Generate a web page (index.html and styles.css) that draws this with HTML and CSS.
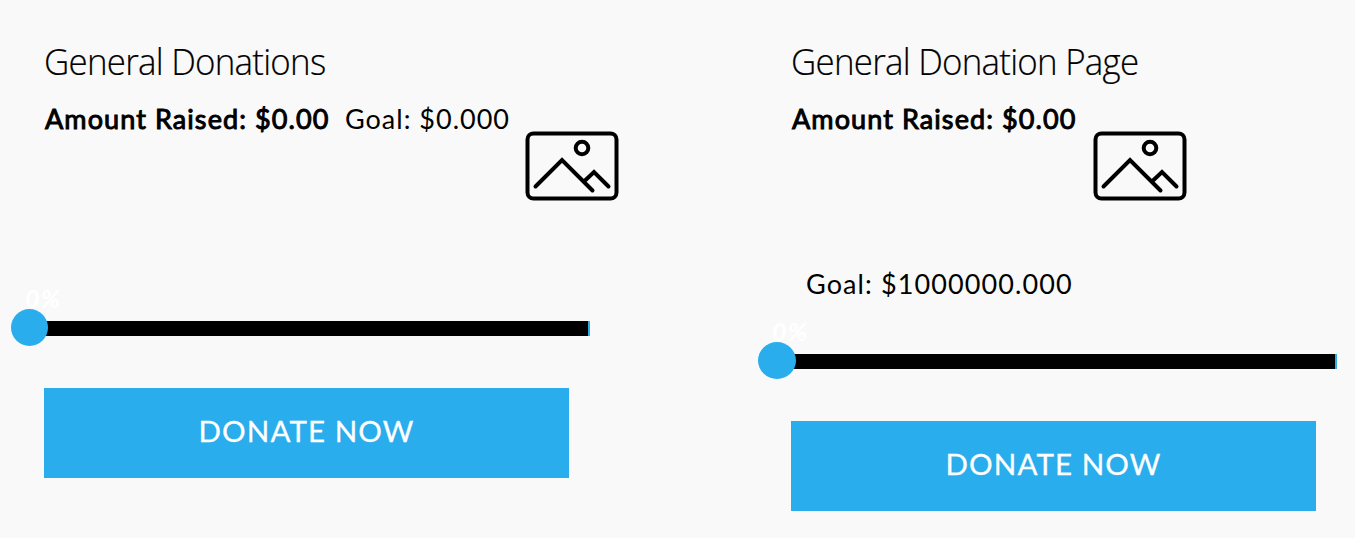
FILE: index.html
```
<!DOCTYPE html>
<html lang="en">
<head>
<meta charset="utf-8">
<title>Donations</title>
<link rel="stylesheet" href="styles.css">
</head>
<body>
<svg class="symbols" aria-hidden="true">
  <symbol id="picture" viewBox="0 0 94 70">
    <g fill="none" stroke="#000" stroke-width="4" stroke-linecap="round">
      <rect x="2.5" y="2.5" width="89" height="65" rx="6"/>
      <circle cx="57" cy="17" r="6.3"/>
      <path d="M10.5 55.5 37 29 67.5 59.5M59 50.5 69 41 83.5 55.5"/>
    </g>
  </symbol>
</svg>
<main class="campaigns">
  <section class="campaign">
    <h2 class="title">General Donations</h2>
    <div class="stats">
      <strong class="raised">Amount Raised: $0.00</strong>
      <span class="goal">Goal: $0.000</span>
      <svg class="picture"><use href="#picture"/></svg>
    </div>
    <div class="progress"><span class="knob"><em class="percent">0%</em></span></div>
    <a class="donate">DONATE NOW</a>
  </section>
  <section class="campaign">
    <h2 class="title">General Donation Page</h2>
    <div class="stats stats-wrapped">
      <strong class="raised">Amount Raised: $0.00</strong>
      <svg class="picture"><use href="#picture"/></svg>
      <span class="goal goal-long">Goal: $1000000.000</span>
    </div>
    <div class="progress"><span class="knob knob-wide"><em class="percent">0%</em></span></div>
    <a class="donate">DONATE NOW</a>
  </section>
</main>
</body>
</html>
```
FILE: styles.css
```
* { box-sizing: border-box; }
body {
  margin: 0;
  background: #f9f9f9;
  color: #000;
  font-family: Lato, "Open Sans", sans-serif;
  overflow: hidden;
}
.symbols { position: absolute; width: 0; height: 0; }
.campaigns {
  display: grid;
  grid-template-columns: 525px 525px;
  column-gap: 222px;
  padding: 36px 0 0 44px;
}
.title {
  margin: 0;
  height: 64px;
  font: 300 37px/50px "Open Sans", sans-serif;
  letter-spacing: -0.8px;
  white-space: nowrap;
  transform: scaleX(0.943);
  transform-origin: left;
  -webkit-text-stroke: 0.2px #000;
}
.stats {
  display: flex;
  align-items: flex-start;
  width: 600px;
  height: 221px;
  white-space: nowrap;
}
.stats-wrapped { flex-wrap: wrap; width: 420px; height: 254px; align-content: flex-start; }
.raised, .goal { font-size: 27px; line-height: 37px; }
.raised {
  width: 301px;
  padding-left: 1px;
  letter-spacing: 1.1px;
  font-weight: 400;
  -webkit-text-stroke: 1px #000;
}
.goal { width: 180px; letter-spacing: 1px; font-weight: 400; }
.picture { width: 94px; height: 70px; margin-top: 31px; flex: none; }
.stats-wrapped .picture { margin-bottom: 64px; margin-left: 1px; }
.goal-long { margin-left: 15px; width: auto; letter-spacing: 1.1px; }
.progress {
  position: relative;
  width: 561px;
  height: 15px;
  margin-left: -15px;
  background: #000;
  border-right: 2px solid #29adec;
}
.knob {
  position: absolute;
  left: -18px;
  top: -12px;
  width: 37px;
  height: 37px;
  border-radius: 50%;
  background: #29adec;
}
.knob-wide { width: 38px; }
.percent {
  position: absolute;
  left: 14px;
  top: -27px;
  color: #fff;
  font-size: 25px;
  line-height: 32px;
  font-weight: 700;
  font-style: italic;
  letter-spacing: 1.5px;
  -webkit-text-stroke: 0.4px #fff;
}
.donate {
  display: block;
  height: 90px;
  margin-top: 52px;
  background: #29adec;
  color: #fff;
  font-size: 29.5px;
  line-height: 86px;
  letter-spacing: 1.1px;
  -webkit-text-stroke: 0.3px #fff;
  text-align: center;
}
```
